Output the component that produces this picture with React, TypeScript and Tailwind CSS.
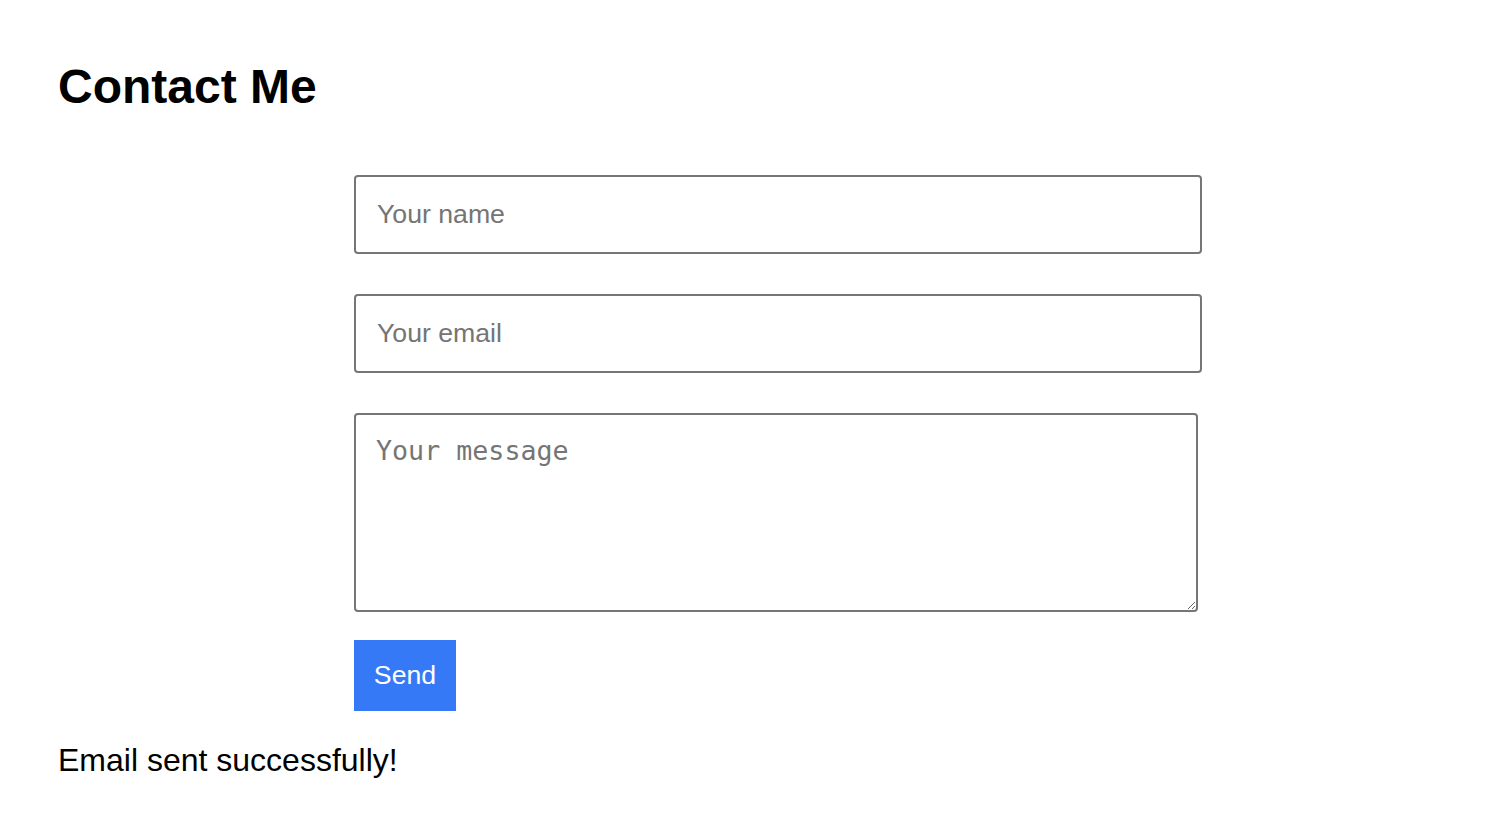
export default function App() {
    return (
        <div className="min-h-screen bg-white pl-[58px] pt-[59px] font-['Liberation_Sans',Arial,sans-serif] text-black">
            <h1 className="text-[48px] font-bold leading-[55px]">Contact Me</h1>

            <form
                className="ml-[296px] mt-[61px] flex flex-col items-start"
                onSubmit={(e) => e.preventDefault()}
            >
                <input
                    type="text"
                    placeholder="Your name"
                    className="h-[79px] w-[848px] rounded-[4px] border-2 border-[#767676] px-[21px] text-[26.67px] outline-none placeholder:text-[#757575]"
                />
                <input
                    type="email"
                    placeholder="Your email"
                    className="mt-[40px] h-[79px] w-[848px] rounded-[4px] border-2 border-[#767676] px-[21px] text-[26.67px] outline-none placeholder:text-[#757575]"
                />
                <textarea
                    placeholder="Your message"
                    className="mt-[40px] h-[199px] w-[844px] rounded-[4px] border-2 border-[#767676] px-[20px] py-[20px] font-['DejaVu_Sans_Mono',monospace] text-[26.67px] leading-[31px] outline-none placeholder:text-[#757575]"
                />
                <button
                    type="submit"
                    className="mt-[28px] h-[71px] w-[102px] bg-[#3579f6] pb-[2px] text-[26.67px] text-white"
                >
                    Send
                </button>
            </form>

            <p className="mt-[31px] text-[32px] leading-[37px]">Email sent successfully!</p>
        </div>
    );
}
